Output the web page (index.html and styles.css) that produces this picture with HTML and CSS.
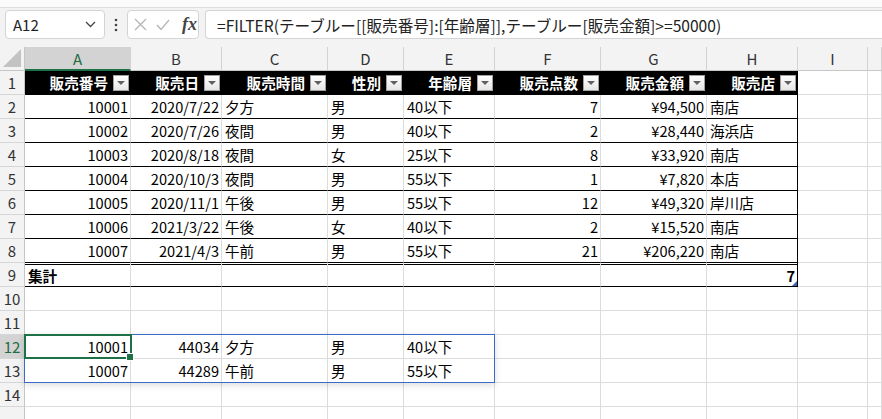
FILE: index.html
```html
<!DOCTYPE html>
<html lang="ja">
<head>
    <meta charset="UTF-8">
    <title>FILTER - テーブルー</title>
    <link rel="stylesheet" href="styles.css">
</head>
<body>

<div class="topstrip"></div>

<div class="fbar">
    <div class="namebox">
        <span>A12</span>
        <svg width="11" height="7" viewBox="0 0 11 7"><path d="M1 1 L5.5 5.5 L10 1" fill="none" stroke="#444" stroke-width="1.3"/></svg>
    </div>
    <div class="dots">
        <svg width="4" height="14" viewBox="0 0 4 14"><circle cx="2" cy="2" r="1.3" fill="#444"/><circle cx="2" cy="7" r="1.3" fill="#444"/><circle cx="2" cy="12" r="1.3" fill="#444"/></svg>
    </div>
    <div class="fxbox">
        <svg width="13" height="13" viewBox="0 0 13 13"><path d="M1 1 L12 12 M12 1 L1 12" stroke="#b4b4b4" stroke-width="1.2"/></svg>
        <svg width="14" height="12" viewBox="0 0 14 12"><path d="M1 6 L5 10.5 L13 1" fill="none" stroke="#b4b4b4" stroke-width="1.2"/></svg>
        <span class="fx">fx</span>
    </div>
    <div class="formula">=FILTER(テーブルー[[販売番号]:[年齢層]],テーブルー[販売金額]&gt;=50000)</div>
</div>

<div class="sheet">
    <!-- column headers -->
    <div class="corner"><svg width="18" height="18" viewBox="0 0 18 18"><path d="M18 0 L18 18 L0 18 Z" fill="#c3c3c3"/></svg></div>
    <div class="ch sel">A</div>
    <div class="ch">B</div>
    <div class="ch">C</div>
    <div class="ch">D</div>
    <div class="ch">E</div>
    <div class="ch">F</div>
    <div class="ch">G</div>
    <div class="ch">H</div>
    <div class="ch">I</div>
    <div class="ch"></div>

    <!-- row 1: table header -->
    <div class="rh">1</div>
    <div class="c th">販売番号<span class="dd"></span></div>
    <div class="c th">販売日<span class="dd"></span></div>
    <div class="c th">販売時間<span class="dd"></span></div>
    <div class="c th">性別<span class="dd"></span></div>
    <div class="c th">年齢層<span class="dd"></span></div>
    <div class="c th">販売点数<span class="dd"></span></div>
    <div class="c th">販売金額<span class="dd"></span></div>
    <div class="c th last">販売店<span class="dd"></span></div>
    <div class="c"></div>
    <div class="c"></div>

    <div class="rh">2</div>
    <div class="c tb rt">10001</div>
    <div class="c tb rt">2020/7/22</div>
    <div class="c tb">夕方</div>
    <div class="c tb">男</div>
    <div class="c tb">40以下</div>
    <div class="c tb rt">7</div>
    <div class="c tb rt">¥94,500</div>
    <div class="c tb last">南店</div>
    <div class="c"></div>
    <div class="c"></div>

    <div class="rh">3</div>
    <div class="c tb rt">10002</div>
    <div class="c tb rt">2020/7/26</div>
    <div class="c tb">夜間</div>
    <div class="c tb">男</div>
    <div class="c tb">40以下</div>
    <div class="c tb rt">2</div>
    <div class="c tb rt">¥28,440</div>
    <div class="c tb last">海浜店</div>
    <div class="c"></div>
    <div class="c"></div>

    <div class="rh">4</div>
    <div class="c tb rt">10003</div>
    <div class="c tb rt">2020/8/18</div>
    <div class="c tb">夜間</div>
    <div class="c tb">女</div>
    <div class="c tb">25以下</div>
    <div class="c tb rt">8</div>
    <div class="c tb rt">¥33,920</div>
    <div class="c tb last">南店</div>
    <div class="c"></div>
    <div class="c"></div>

    <div class="rh">5</div>
    <div class="c tb rt">10004</div>
    <div class="c tb rt">2020/10/3</div>
    <div class="c tb">夜間</div>
    <div class="c tb">男</div>
    <div class="c tb">55以下</div>
    <div class="c tb rt">1</div>
    <div class="c tb rt">¥7,820</div>
    <div class="c tb last">本店</div>
    <div class="c"></div>
    <div class="c"></div>

    <div class="rh">6</div>
    <div class="c tb rt">10005</div>
    <div class="c tb rt">2020/11/1</div>
    <div class="c tb">午後</div>
    <div class="c tb">男</div>
    <div class="c tb">55以下</div>
    <div class="c tb rt">12</div>
    <div class="c tb rt">¥49,320</div>
    <div class="c tb last">岸川店</div>
    <div class="c"></div>
    <div class="c"></div>

    <div class="rh">7</div>
    <div class="c tb rt">10006</div>
    <div class="c tb rt">2021/3/22</div>
    <div class="c tb">午後</div>
    <div class="c tb">女</div>
    <div class="c tb">40以下</div>
    <div class="c tb rt">2</div>
    <div class="c tb rt">¥15,520</div>
    <div class="c tb last">南店</div>
    <div class="c"></div>
    <div class="c"></div>

    <div class="rh">8</div>
    <div class="c tb rt">10007</div>
    <div class="c tb rt">2021/4/3</div>
    <div class="c tb">午前</div>
    <div class="c tb">男</div>
    <div class="c tb">55以下</div>
    <div class="c tb rt">21</div>
    <div class="c tb rt">¥206,220</div>
    <div class="c tb last">南店</div>
    <div class="c"></div>
    <div class="c"></div>

    <!-- row 9: totals -->
    <div class="rh">9</div>
    <div class="c tot bold">集計</div>
    <div class="c tot"></div>
    <div class="c tot"></div>
    <div class="c tot"></div>
    <div class="c tot"></div>
    <div class="c tot"></div>
    <div class="c tot"></div>
    <div class="c tot last rt bold grip">7</div>
    <div class="c"></div>
    <div class="c"></div>

    <div class="rh">10</div>
    <div class="c"></div><div class="c"></div><div class="c"></div><div class="c"></div><div class="c"></div>
    <div class="c"></div><div class="c"></div><div class="c"></div><div class="c"></div><div class="c"></div>

    <div class="rh">11</div>
    <div class="c"></div><div class="c"></div><div class="c"></div><div class="c"></div><div class="c"></div>
    <div class="c"></div><div class="c"></div><div class="c"></div><div class="c"></div><div class="c"></div>

    <!-- spilled FILTER result -->
    <div class="rh sel">12</div>
    <div class="c rt">10001</div>
    <div class="c rt">44034</div>
    <div class="c">夕方</div>
    <div class="c">男</div>
    <div class="c">40以下</div>
    <div class="c"></div><div class="c"></div><div class="c"></div><div class="c"></div><div class="c"></div>

    <div class="rh">13</div>
    <div class="c rt">10007</div>
    <div class="c rt">44289</div>
    <div class="c">午前</div>
    <div class="c">男</div>
    <div class="c">55以下</div>
    <div class="c"></div><div class="c"></div><div class="c"></div><div class="c"></div><div class="c"></div>

    <div class="rh">14</div>
    <div class="c"></div><div class="c"></div><div class="c"></div><div class="c"></div><div class="c"></div>
    <div class="c"></div><div class="c"></div><div class="c"></div><div class="c"></div><div class="c"></div>

    <div class="rh"></div>
    <div class="c"></div><div class="c"></div><div class="c"></div><div class="c"></div><div class="c"></div>
    <div class="c"></div><div class="c"></div><div class="c"></div><div class="c"></div><div class="c"></div>

    <!-- overlays -->
    <div class="spill"></div>
    <div class="active"><span class="handle"></span></div>
</div>

</body>
</html>
```

FILE: styles.css
```css
body {
    margin: 0;
    font-family: "Noto Sans CJK JP", "Noto Sans", sans-serif;
    background-color: #fff;
    color: #000;
    width: 882px;
    height: 419px;
    overflow: hidden;
}

.topstrip {
    height: 7px;
    background-color: #fbfbfb;
    border-bottom: 1px solid #dedede;
    box-shadow: 0 1px 2px rgba(0, 0, 0, 0.06);
}

/* formula bar */
.fbar {
    display: flex;
    align-items: center;
    padding: 2px 0 8px 5px;
    background-color: #f3f3f3;
}

.namebox,
.fxbox,
.formula {
    height: 29px;
    box-sizing: border-box;
    background-color: #fff;
    border: 1px solid #d4d4d4;
    border-radius: 4px;
    display: flex;
    align-items: center;
}

.namebox {
    width: 100px;
    justify-content: space-between;
    padding: 0 8px 0 7px;
    font-size: 15px;
    color: #222;
}

.dots {
    width: 22px;
    display: flex;
    justify-content: center;
}

.fxbox {
    width: 72px;
    padding: 0 0 0 6px;
    gap: 9px;
}

.fx {
    font-family: "Liberation Serif", serif;
    font-style: italic;
    font-weight: bold;
    font-size: 18px;
    color: #444;
    margin-left: 3px;
}

.formula {
    flex: 1;
    margin-left: 6px;
    padding-left: 11px;
    border-right: none;
    border-radius: 4px 0 0 4px;
    font-size: 15.6px;
    color: #222;
    white-space: nowrap;
}

/* sheet grid */
.sheet {
    position: relative;
    display: grid;
    grid-template-columns: 25px 106px 91px 106px 76px 91px 106px 106px 91px 70px 1fr;
    grid-auto-rows: 24px;
    font-size: 14.6px;
}

.corner {
    background-color: #f3f3f3;
    border-right: 1px solid #c6c6c6;
    border-bottom: 1px solid #c6c6c6;
    box-sizing: border-box;
    display: flex;
    align-items: flex-end;
    justify-content: flex-end;
    padding: 0 3px 3px 0;
}

.ch {
    background-color: #f3f3f3;
    border-right: 1px solid #d2d2d2;
    border-bottom: 1px solid #c6c6c6;
    box-sizing: border-box;
    display: flex;
    align-items: center;
    justify-content: center;
    font-size: 15px;
    color: #333;
}

.ch.sel {
    background-color: #d3d3d3;
    color: #1e6b41;
    border-bottom: 2px solid #1e7145;
}

.rh {
    background-color: #f3f3f3;
    border-right: 1px solid #c6c6c6;
    border-bottom: 1px solid #d6d6d6;
    box-sizing: border-box;
    display: flex;
    align-items: center;
    justify-content: center;
    font-size: 15px;
    color: #333;
}

.rh.sel {
    background-color: #d3d3d3;
    color: #1e6b41;
}

.c {
    border-right: 1px solid #dcdcdc;
    border-bottom: 1px solid #dcdcdc;
    box-sizing: border-box;
    display: flex;
    align-items: center;
    padding: 0 2px 0 3px;
    white-space: nowrap;
    overflow: hidden;
}

.rt {
    justify-content: flex-end;
}

.bold {
    font-weight: bold;
}

/* table styling */
.th {
    background-color: #000;
    color: #fff;
    font-weight: bold;
    justify-content: flex-end;
    gap: 5px;
    padding-right: 1px;
    border-right-color: #000;
    border-bottom-color: #000;
}

.dd {
    width: 16px;
    height: 16px;
    box-sizing: border-box;
    border: 1px solid #a2a2a2;
    background: linear-gradient(#fefefe, #e6e6e6);
    display: flex;
    align-items: center;
    justify-content: center;
    flex-shrink: 0;
}

.dd::after {
    content: "";
    border-left: 4px solid transparent;
    border-right: 4px solid transparent;
    border-top: 4px solid #606060;
    margin-top: 1px;
}

.tb {
    border-bottom-color: #000;
}

.last {
    border-right-color: #000;
}

.tot {
    border-bottom-color: #000;
    box-shadow: inset 0 1px 0 #fff, inset 0 2px 0 #000;
    padding-top: 1px;
}

.grip {
    position: relative;
}

.grip::after {
    content: "";
    position: absolute;
    right: 0;
    bottom: 0;
    border-left: 5px solid transparent;
    border-bottom: 5px solid #3e5fb4;
}

/* selection overlays */
.spill {
    position: absolute;
    grid-column: 2 / 7;
    grid-row: 13 / 15;
    top: -1px;
    left: -1px;
    right: 0;
    bottom: 0;
    border: 1px solid #3a6bc6;
    box-shadow: 0 2px 7px rgba(0, 0, 0, 0.14);
    pointer-events: none;
}

.active {
    position: absolute;
    grid-column: 2 / 3;
    grid-row: 13 / 14;
    top: -1px;
    left: -1px;
    right: -1px;
    bottom: 0;
    border: 2px solid #1e7145;
    pointer-events: none;
}

.handle {
    position: absolute;
    right: -4px;
    bottom: -4px;
    width: 6px;
    height: 6px;
    background-color: #1e7145;
    border: 1px solid #fff;
}
```
